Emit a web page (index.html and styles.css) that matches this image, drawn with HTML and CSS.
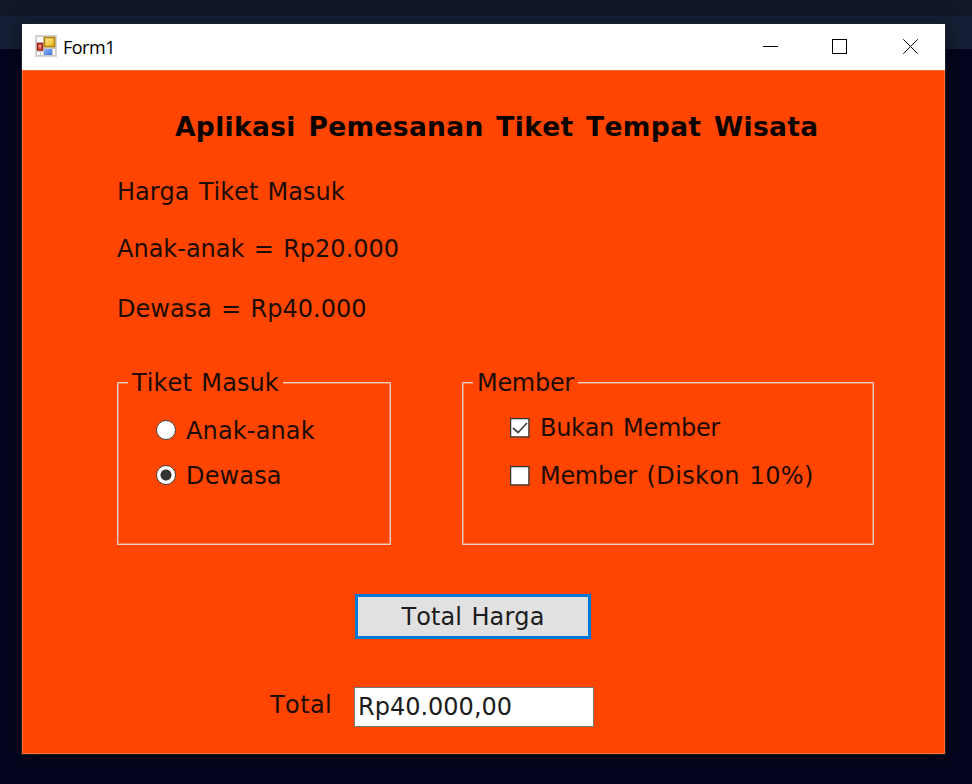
FILE: index.html
```html
<!DOCTYPE html>
<html lang="id">
<head>
<meta charset="utf-8">
<title>Form1</title>
<link rel="stylesheet" href="styles.css">
</head>
<body>
<main class="window">
  <header class="titlebar">
    <svg class="app-icon" width="22" height="22" viewBox="0 0 22 22">
      <defs>
        <linearGradient id="gold" x1="0" y1="0" x2="1" y2="1"><stop offset="0" stop-color="#ffe9a0"/><stop offset="1" stop-color="#f2b511"/></linearGradient>
        <linearGradient id="blue" x1="0" y1="0" x2="1" y2="1"><stop offset="0" stop-color="#8db6fa"/><stop offset="1" stop-color="#3c74de"/></linearGradient>
      </defs>
      <rect x=".5" y=".5" width="21" height="21" fill="#c9c9c9" stroke="#d6d6d6"/>
      <path fill="#fff" d="M2 2h6v5H2zM2 17h3v3H2zM6 17h2v3H6zM18 14h2v6h-2z"/>
      <rect x="9.500" y="2.500" width="10" height="9" fill="url(#gold)" stroke="#b68708" stroke-width="1.600"/>
      <rect x="2.500" y="8.500" width="5" height="6.500" fill="#d9574a" stroke="#a51f16" stroke-width="1.400"/>
      <rect x="4" y="10" width="2" height="2.500" fill="#efa196"/>
      <rect x="9" y="14" width="8" height="6" fill="url(#blue)"/>
    </svg>
    <span class="caption">Form1</span>
    <svg class="controls" width="156" height="16" viewBox="0 0 156 16" fill="none" stroke="#000">
      <path d="M0 7.500h15"/>
      <rect x="69.500" y=".5" width="14" height="14"/>
      <path d="M140.300 .3l14.400 14.400M154.700 .3l-14.400 14.400"/>
    </svg>
  </header>
  <form class="form">
    <h1 class="heading">Aplikasi Pemesanan Tiket Tempat Wisata</h1>
    <section class="prices">
      <p class="price">Harga Tiket Masuk</p>
      <p class="price price-child">Anak-anak = Rp20.000</p>
      <p class="price price-adult">Dewasa = Rp40.000</p>
    </section>
    <div class="groups">
      <section class="group group-ticket">
        <h2 class="legend"><span>Tiket Masuk</span></h2>
        <div class="option"><i class="radio"></i><span>Anak-anak</span></div>
        <div class="option"><i class="radio checked"></i><span>Dewasa</span></div>
      </section>
      <section class="group group-member">
        <h2 class="legend"><span class="tight">Member</span></h2>
        <div class="option"><svg class="check" width="20" height="20" viewBox="0 0 20 20"><rect x=".6" y=".6" width="18.300" height="18.300" fill="#fff" stroke="#333" stroke-width="1.300"/><path d="M3 10l5 4.500L17 5" fill="none" stroke="#444" stroke-width="1.700"/></svg><span class="tight">Bukan Member</span></div>
        <div class="option"><svg class="check" width="20" height="20" viewBox="0 0 20 20"><rect x=".6" y=".6" width="18.300" height="18.300" fill="#fff" stroke="#333" stroke-width="1.300"/></svg><span class="loose"><span class="tight">Member</span> (Diskon 10%)</span></div>
      </section>
    </div>
    <button type="button" class="submit">Total Harga</button>
    <div class="total">
      <span class="total-label">Total</span>
      <div class="total-value">Rp40.000,00</div>
    </div>
  </form>
</main>
</body>
</html>
```
FILE: styles.css
```css
* { box-sizing: border-box; }
body {
  margin: 0;
  width: 972px;
  height: 784px;
  overflow: hidden;
  padding: 24px 27px 30px 22px;
  background: linear-gradient(#101828 0 16px, #152036 16px 49px, #04041e 49px);
  font: 24px/30px Verdana, "DejaVu Sans", sans-serif;
  font-kerning: none;
  word-spacing: 1.7px;
  color: #1c0c04;
}
.window {
  width: 923px;
  height: 730px;
  box-shadow: 0 0 0 1px #1b2028, 0 3px 14px 2px rgba(0, 5, 10, .5);
}
.titlebar {
  height: 46px;
  background: #fff;
  display: flex;
  align-items: center;
  padding: 0 26px 2px 13px;
}
.app-icon { margin-bottom: 1px; }
.caption {
  font: 18px/24px "Segoe UI", "Open Sans", sans-serif;
  color: #000;
  margin: 2px 0 0 6px;
  letter-spacing: -.5px;
}
.controls { margin: 2px 0 0 auto; }
.form {
  height: 684px;
  background: #ff4500;
  border: 1px solid #ff6a33;
  padding-top: 41px;
}
.heading, .legend, .price { margin: 0; font-size: 24px; font-weight: normal; white-space: nowrap; }
.heading {
  font-size: 26.5px;
  font-weight: bold;
  padding-left: 152px;
  color: #0a0300;
  letter-spacing: .35px;
  word-spacing: 3px;
}
.prices { padding: 35px 0 0 94px; }
.price-child { margin-top: 27px; }
.price-adult { margin-top: 30px; }
.groups { display: flex; gap: 71px; padding: 58px 0 0 94px; }
.group {
  height: 163px;
  border: 1px solid #ecd0c4;
  box-shadow: inset 0 0 0 1px #f98052;
}
.group-ticket { width: 274px; }
.group-member { width: 412px; }
.legend { margin-top: -15px; padding-left: 10px; height: 30px; }
.legend span { display: inline-block; background: #ff4500; padding: 0 4px; }
.group-ticket .legend { letter-spacing: .1px; }
.option { display: flex; align-items: center; gap: 10px; white-space: nowrap; height: 30px; }
.group-ticket .option { padding-left: 38px; margin-top: 18px; letter-spacing: .15px; }
.group-ticket .option + .option { margin-top: 15px; }
.group-member .option { padding-left: 47px; margin-top: 15px; }
.group-member .option + .option { margin-top: 18px; }
.tight { letter-spacing: -.3px; }
.loose { letter-spacing: .35px; }
.loose .tight { letter-spacing: -.3px; }
.radio {
  width: 20px; height: 20px;
  margin: -2px .5px 0 -.5px;
  border: 1.5px solid #444;
  border-radius: 50%;
  background: #fff;
}
.radio.checked { background: radial-gradient(circle, #333 0 5px, #fff 6px); }
.submit {
  display: block;
  width: 236px;
  height: 45px;
  margin: 49px 0 0 332px;
  padding: 0;
  border: 3px solid #0078d7;
  background: #e1e1e1;
  font: inherit;
  font-kerning: none;
  word-spacing: 1.6px;
  letter-spacing: .1px;
  color: #1c1c1c;
}
.total { display: flex; padding: 48px 0 0 247px; }
.total-label { width: 84px; padding-top: 3px; letter-spacing: .4px; }
.total-value {
  width: 240px;
  height: 40px;
  border: 1.5px solid #7a7a7a;
  background: #fff;
  color: #1c1c1c;
  padding: 4px 0 0 3px;
  white-space: nowrap;
}
```
